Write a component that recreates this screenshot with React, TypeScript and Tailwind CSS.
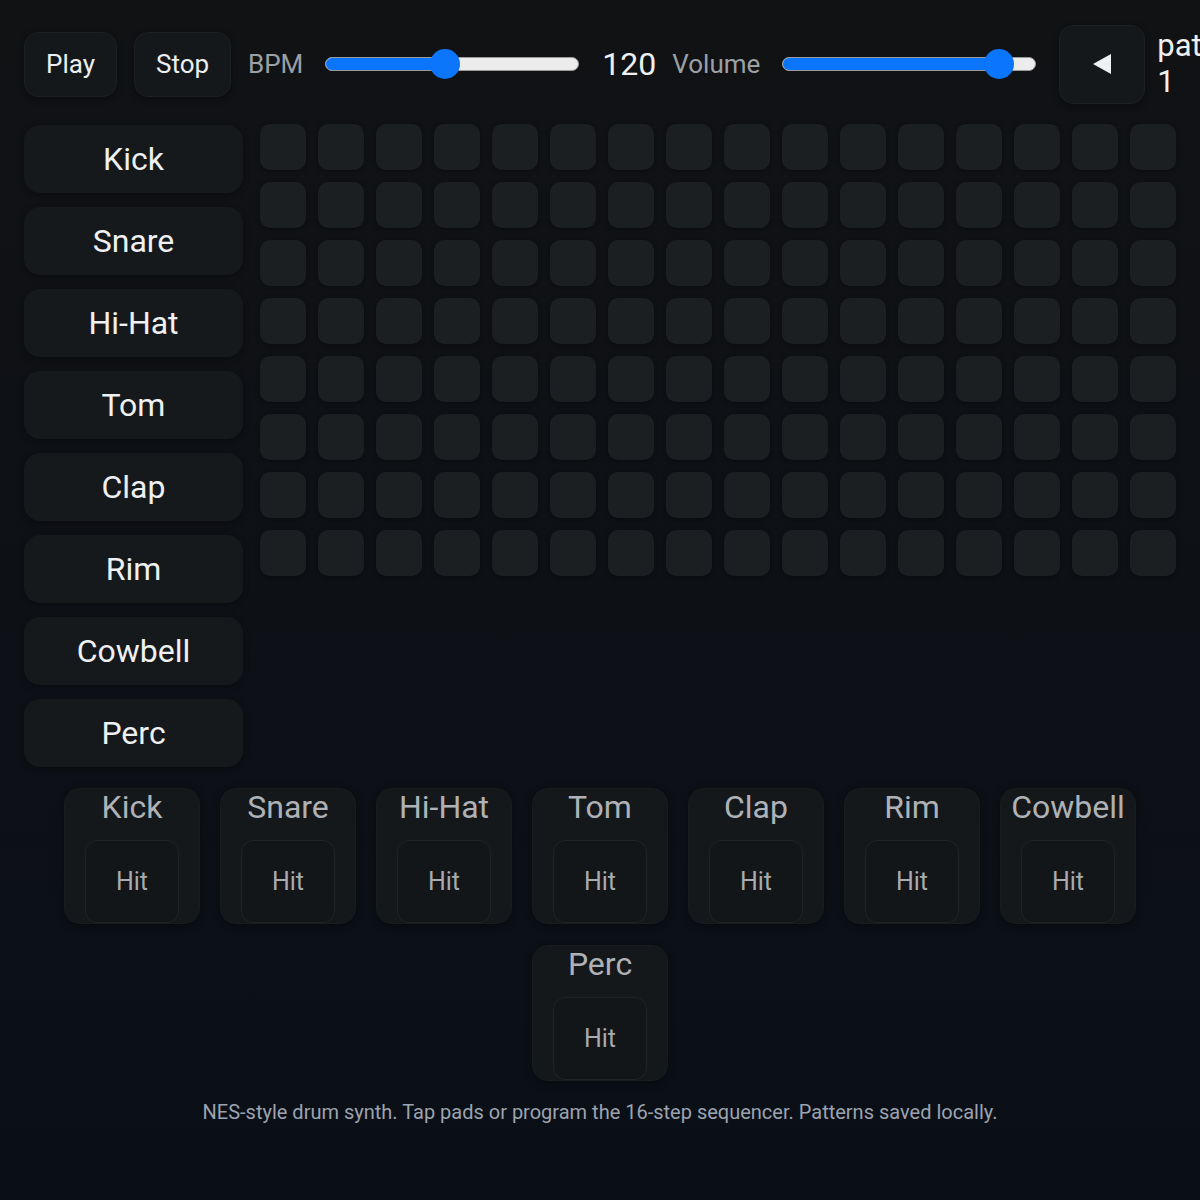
import React from 'react'

const TRACKS = ['Kick', 'Snare', 'Hi-Hat', 'Tom', 'Clap', 'Rim', 'Cowbell', 'Perc']
const STEPS = 16

function Slider({ value, min, max }: { value: number; min: number; max: number }) {
  const pct = (value - min) / (max - min)
  const thumbLeft = pct * (254 - 30)
  return (
    <div className="relative h-[30px] w-[254px] shrink-0">
      <div className="absolute left-0 right-0 top-[8px] h-[14px] overflow-hidden rounded-full border border-[#9a9a9a] bg-[#ececec]">
        <div className="h-full bg-[#0b75fc]" style={{ width: thumbLeft + 15 }} />
      </div>
      <div
        className="absolute top-0 h-[30px] w-[30px] rounded-full bg-[#0b75fc]"
        style={{ left: thumbLeft }}
      />
    </div>
  )
}

function TopButton({ children, className = '' }: { children: React.ReactNode; className?: string }) {
  return (
    <button
      className={`flex h-[65px] shrink-0 items-center justify-center rounded-[14px] border border-[#1c1f22] bg-[#15181a] text-[26px] text-[#eceff1] shadow-[0_2px_6px_rgba(0,0,0,0.35)] ${className}`}
    >
      {children}
    </button>
  )
}

function PadCard({ name }: { name: string }) {
  return (
    <div className="flex h-[136px] w-[136px] flex-col items-center rounded-[16px] border border-[#191c1f] bg-[#15181a] shadow-[0_2px_8px_rgba(0,0,0,0.3)]">
      <div className="h-[37px] text-[32px] leading-[37px] text-[#aeb2b6]">{name}</div>
      <button className="mt-[14px] flex h-[83px] w-[94px] items-center justify-center rounded-[12px] border border-[#1f2326] bg-[#131618] text-[25px] text-[#a7abaf]">
        Hit
      </button>
    </div>
  )
}

export default function App() {
  return (
    <div className="min-h-screen w-full overflow-hidden bg-gradient-to-b from-[#111214] to-[#0a0f17] p-6 font-['Roboto',sans-serif]">
      {/* transport */}
      <div className="flex h-[80px] items-center">
        <TopButton className="w-[93px]">Play</TopButton>
        <TopButton className="ml-[17px] w-[97px]">Stop</TopButton>
        <span className="ml-[17px] shrink-0 text-[26px] text-[#9aa0a6]">BPM</span>
        <div className="ml-[22px]">
          <Slider value={120} min={50} max={200} />
        </div>
        <span className="ml-[23px] shrink-0 text-[32px] text-[#eef0f2]">120</span>
        <span className="ml-[16px] shrink-0 text-[26px] text-[#9aa0a6]">Volume</span>
        <div className="ml-[22px]">
          <Slider value={0.9} min={0} max={1} />
        </div>
        <button className="ml-[23px] flex h-[79px] w-[86px] shrink-0 items-center justify-center rounded-[14px] border border-[#1c1f22] bg-[#15181a] shadow-[0_2px_6px_rgba(0,0,0,0.35)]">
          <svg width="20" height="22" viewBox="0 0 20 22">
            <polygon points="1,11 19,1 19,21" fill="#eef0f2" />
          </svg>
        </button>
        <div className="ml-[12px] w-[92px] shrink-0 text-[31px] leading-[36px] text-[#eef0f2]">pattern 1</div>
      </div>

      {/* sequencer */}
      <div className="mt-[21px] flex items-start gap-[17px]">
        <div className="flex w-[219px] shrink-0 flex-col gap-[14px]">
          {TRACKS.map((t) => (
            <div
              key={t}
              className="flex h-[68px] items-center justify-center rounded-[16px] bg-[#16191b] text-[32px] text-[#eef0f2] shadow-[0_2px_6px_rgba(0,0,0,0.3)]"
            >
              {t}
            </div>
          ))}
        </div>
        <div className="-mt-px grid grid-cols-[repeat(16,46px)] gap-[12px]">
          {TRACKS.flatMap((t) =>
            Array.from({ length: STEPS }, (_, i) => (
              <div
                key={`${t}-${i}`}
                className="h-[46px] w-[46px] rounded-[10px] bg-[#1c1f22] shadow-[0_1px_4px_rgba(0,0,0,0.35)]"
              />
            ))
          )}
        </div>
      </div>

      {/* pads */}
      <div className="mt-[21px] flex flex-wrap justify-center gap-x-[20px] gap-y-[21px]">
        {TRACKS.map((t) => (
          <PadCard key={t} name={t} />
        ))}
      </div>

      <p className="mt-[17px] text-center text-[20px] leading-[28px] text-[#9ca3af]">
        NES-style drum synth. Tap pads or program the 16-step sequencer. Patterns saved locally.
      </p>
    </div>
  )
}
